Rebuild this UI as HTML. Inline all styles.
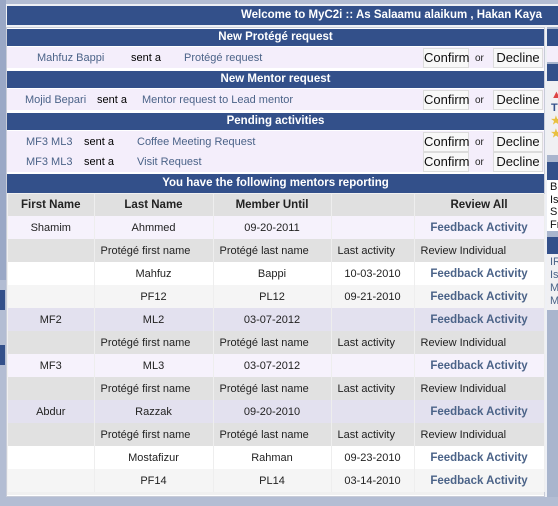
<!DOCTYPE html>
<html><head><meta charset="utf-8"><style>
*{margin:0;padding:0;box-sizing:border-box}
body{width:558px;height:506px;overflow:hidden;background:#b3bdd3;font-family:"Liberation Sans",sans-serif;font-size:11px;position:relative}
.a{position:absolute}
.nav{background:#33508a;color:#fff;font-weight:bold;text-align:center;font-size:11.5px}
.row{background:#f4eefb}
.lk{color:#4b6388}
.btn{position:absolute;background:#f8f8f8;border:1px solid #dcdcdc;font-size:13px;color:#111;text-align:center;line-height:18px;height:20px}
.or{position:absolute;font-size:10px;color:#222}
table{border-collapse:collapse;position:absolute;left:8px;top:194px;width:536px;table-layout:fixed}
td{height:23px;text-align:center;color:#222;border-right:1px solid #eee;font-size:11px;padding:0}
.h td{background:#e0e0e0;font-weight:bold;font-size:11.5px;height:22px}
.s td{background:#e1e1e1;text-align:left;padding-left:6px}
.s td:first-child{padding:0}
.fb{color:#4b6388;font-weight:bold;font-size:11.5px}
</style></head><body>
<div class="a" style="left:0;top:0;width:6px;height:280px;background:#9aa8c6"></div>
<div class="a" style="left:0;top:290px;width:5px;height:20px;background:#33508a"></div>
<div class="a" style="left:0;top:345px;width:5px;height:20px;background:#33508a"></div>
<div class="a" style="left:6px;top:4px;width:552px;height:493px;background:#eef0f5"></div>
<div class="a nav" style="left:7px;top:6px;width:551px;height:19px;text-align:right;padding-right:16px;line-height:19px">Welcome to MyC2i :: As Salaamu alaikum , Hakan Kaya</div>
<div class="a" style="left:6px;top:27px;width:539px;height:470px;background:#fff;border:1px solid #c8ccd8"></div>

<div class="a nav" style="left:7px;top:29px;width:537px;height:17px;line-height:17px">New Protégé request</div>
<div class="a row" style="left:7px;top:47px;width:537px;height:21px"></div>
<div class="a lk" style="left:37px;top:52px">Mahfuz Bappi</div><div class="a" style="left:131px;top:52px">sent a</div><div class="a lk" style="left:184px;top:52px">Protégé request</div>
<div class="btn" style="left:423px;top:48px;width:46px">Confirm</div><div class="or" style="left:475px;top:53px">or</div><div class="btn" style="left:493px;top:48px;width:50px">Decline</div>

<div class="a nav" style="left:7px;top:71px;width:537px;height:17px;line-height:17px">New Mentor request</div>
<div class="a row" style="left:7px;top:89px;width:537px;height:21px"></div>
<div class="a lk" style="left:25px;top:94px">Mojid Bepari</div><div class="a" style="left:97px;top:94px">sent a</div><div class="a lk" style="left:142px;top:94px">Mentor request to Lead mentor</div>
<div class="btn" style="left:423px;top:90px;width:46px">Confirm</div><div class="or" style="left:475px;top:95px">or</div><div class="btn" style="left:493px;top:90px;width:50px">Decline</div>

<div class="a nav" style="left:7px;top:113px;width:537px;height:17px;line-height:17px">Pending activities</div>
<div class="a row" style="left:7px;top:131px;width:537px;height:41px"></div>
<div class="a lk" style="left:26px;top:136px">MF3 ML3</div><div class="a" style="left:84px;top:136px">sent a</div><div class="a lk" style="left:137px;top:136px">Coffee Meeting Request</div>
<div class="btn" style="left:423px;top:132px;width:46px">Confirm</div><div class="or" style="left:475px;top:137px">or</div><div class="btn" style="left:493px;top:132px;width:50px">Decline</div>
<div class="a lk" style="left:26px;top:156px">MF3 ML3</div><div class="a" style="left:84px;top:156px">sent a</div><div class="a lk" style="left:137px;top:156px">Visit Request</div>
<div class="btn" style="left:423px;top:152px;width:46px">Confirm</div><div class="or" style="left:475px;top:157px">or</div><div class="btn" style="left:493px;top:152px;width:50px">Decline</div>

<div class="a nav" style="left:7px;top:174px;width:537px;height:19px;line-height:19px">You have the following mentors reporting</div>
<div class="a" style="left:7px;top:193px;width:537px;height:302px;background:#f0f0f0"></div>
<table>
<colgroup><col style="width:86px"><col style="width:119px"><col style="width:118px"><col style="width:83px"><col style="width:130px"></colgroup>
<tr class="h"><td>First Name</td><td>Last Name</td><td>Member Until</td><td></td><td>Review All</td></tr>
<tr style="background:#f6f2fc"><td>Shamim</td><td>Ahmmed</td><td>09-20-2011</td><td></td><td class="fb">Feedback Activity</td></tr>
<tr class="s"><td></td><td>Protégé first name</td><td>Protégé last name</td><td>Last activity</td><td>Review Individual</td></tr>
<tr style="background:#fff"><td></td><td>Mahfuz</td><td>Bappi</td><td>10-03-2010</td><td class="fb">Feedback Activity</td></tr>
<tr style="background:#f5f5f5"><td></td><td>PF12</td><td>PL12</td><td>09-21-2010</td><td class="fb">Feedback Activity</td></tr>
<tr style="background:#e3e1ef"><td>MF2</td><td>ML2</td><td>03-07-2012</td><td></td><td class="fb">Feedback Activity</td></tr>
<tr class="s"><td></td><td>Protégé first name</td><td>Protégé last name</td><td>Last activity</td><td>Review Individual</td></tr>
<tr style="background:#f6f2fc"><td>MF3</td><td>ML3</td><td>03-07-2012</td><td></td><td class="fb">Feedback Activity</td></tr>
<tr class="s"><td></td><td>Protégé first name</td><td>Protégé last name</td><td>Last activity</td><td>Review Individual</td></tr>
<tr style="background:#e3e1ef"><td>Abdur</td><td>Razzak</td><td>09-20-2010</td><td></td><td class="fb">Feedback Activity</td></tr>
<tr class="s"><td></td><td>Protégé first name</td><td>Protégé last name</td><td>Last activity</td><td>Review Individual</td></tr>
<tr style="background:#fff"><td></td><td>Mostafizur</td><td>Rahman</td><td>09-23-2010</td><td class="fb">Feedback Activity</td></tr>
<tr style="background:#f5f5f5"><td></td><td>PF14</td><td>PL14</td><td>03-14-2010</td><td class="fb">Feedback Activity</td></tr>
</table>

<div class="a" style="left:547px;top:27px;width:11px;height:470px;background:#a9b5cd"></div>
<div class="a" style="left:547px;top:29px;width:11px;height:17px;background:#33508a"></div>
<div class="a" style="left:547px;top:46px;width:11px;height:16px;background:#f4eefb"></div>
<div class="a" style="left:547px;top:64px;width:11px;height:17px;background:#33508a"></div>
<div class="a" style="left:547px;top:81px;width:11px;height:74px;background:#f0f0f3;font-size:11px;font-weight:bold;color:#33508a;padding:8px 0 0 4px;line-height:13px"><span style="color:#d44">▲</span><br>T<br><span style="color:#e8c040">★</span><br><span style="color:#e8c040">★</span></div>
<div class="a" style="left:547px;top:162px;width:11px;height:18px;background:#33508a"></div>
<div class="a" style="left:547px;top:180px;width:11px;height:51px;background:#fff;font-size:11px;line-height:12.5px;padding:1px 0 0 3px;color:#111">B<br>Is<br>S<br>Fr</div>
<div class="a" style="left:547px;top:237px;width:11px;height:17px;background:#33508a"></div>
<div class="a" style="left:547px;top:254px;width:11px;height:56px;background:#f0f0f3;font-size:11px;line-height:13px;padding:2px 0 0 3px;color:#4b6388">IR<br>Is<br>M<br>M</div>
</body></html>
